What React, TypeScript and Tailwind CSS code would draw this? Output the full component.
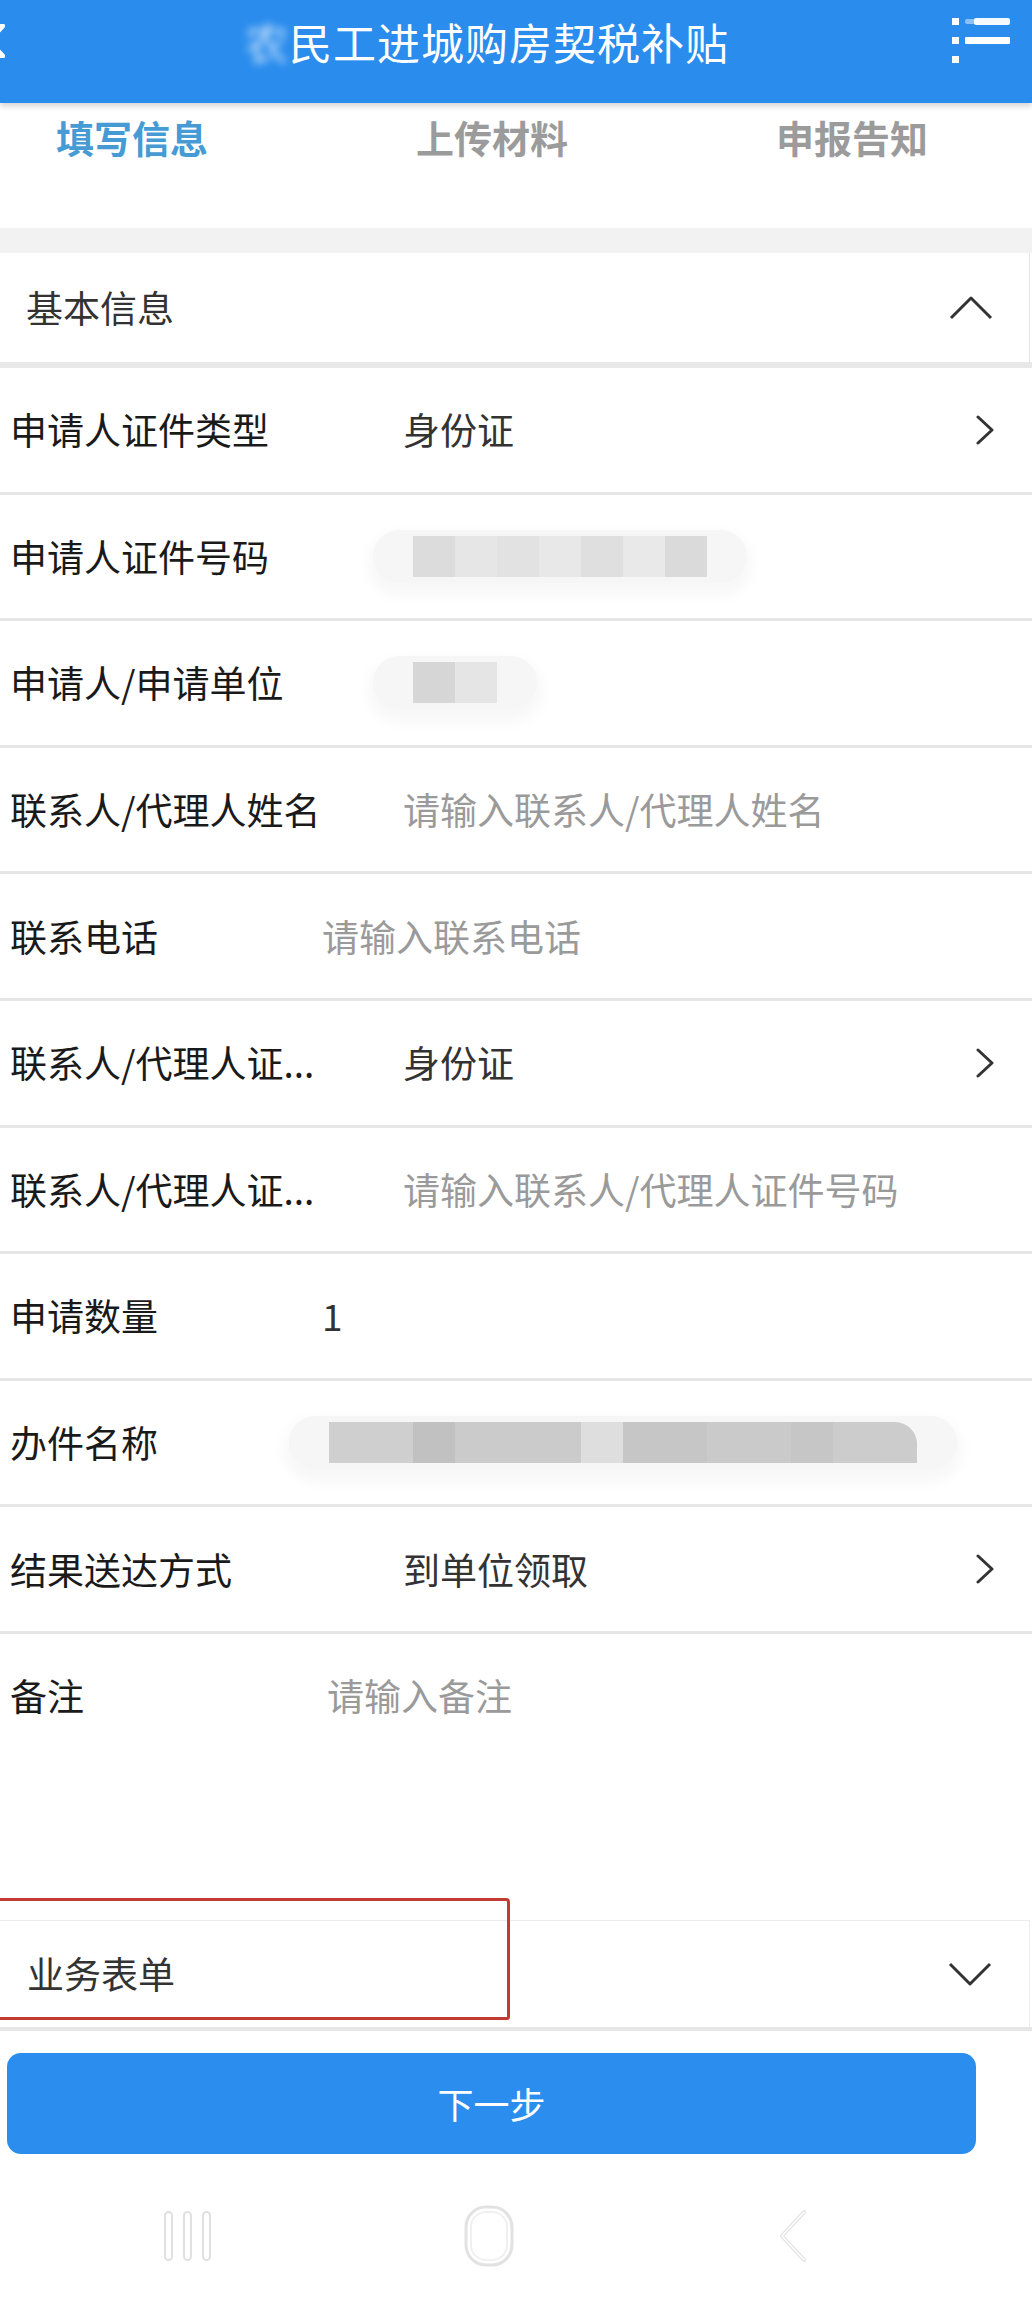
import React from "react";

function ChevronRight() {
  return (
    <svg width="18" height="30" viewBox="0 0 18 30" className="shrink-0">
      <polyline points="2,2 16,15 2,28" fill="none" stroke="#333" strokeWidth="3" strokeLinecap="round" strokeLinejoin="round" />
    </svg>
  );
}

function Row({
  label,
  wide,
  chevron,
  children,
}: {
  label: string;
  wide: boolean;
  chevron?: boolean;
  children?: React.ReactNode;
}) {
  return (
    <div className="flex h-[126.6px] items-center border-b-[3px] border-[#e6e6e6] pl-[10px] pr-[38px]">
      <div className={wide ? "w-[393px] shrink-0 text-[#1a1a1a]" : "w-[312px] shrink-0 text-[#1a1a1a]"}>{label}</div>
      <div className="flex flex-1 items-center">{children}</div>
      {chevron && <ChevronRight />}
    </div>
  );
}

function Blocks({ colors, widths, last }: { colors: string[]; widths: number[]; last?: boolean }) {
  return (
    <div className="rounded-[30px] bg-[#f6f6f6] px-[40px] py-[6px] shadow-[0_8px_14px_6px_#f8f8f8]">
      <div className="flex h-[41px]">
        {colors.map((c, i) => (
          <div
            key={i}
            className={last && i === colors.length - 1 ? "h-full rounded-tr-[22px]" : "h-full"}
            style={{ background: c, width: widths[i] }}
          />
        ))}
      </div>
    </div>
  );
}

export default function App() {
  return (
    <div className="w-[1032px] h-[2307px] overflow-hidden bg-white font-['Noto_Sans_CJK_SC','Noto_Sans',sans-serif] text-[37px] leading-none">
      {/* Header */}
      <div className="relative z-10 flex h-[103px] items-center bg-[#2a8ced] pb-[21px] shadow-[0_3px_6px_rgba(0,0,0,0.18)]">
        <svg width="30" height="34" viewBox="0 0 30 34" className="-ml-[24px] shrink-0">
          <polyline points="26,2 12,17 26,32" fill="none" stroke="#ffffff" strokeWidth="6" strokeLinecap="round" strokeLinejoin="round" />
        </svg>
        <div className="ml-[239px] whitespace-nowrap text-[43px] tracking-[1px] text-white">
          <span className="inline-block blur-[4px] opacity-80">农</span>民工进城购房契税补贴
        </div>
        <div className="flex-1" />
        <svg width="58" height="46" viewBox="0 0 58 46" className="mr-[22px] shrink-0">
          <rect x="0" y="0" width="7" height="7" fill="#fff" />
          <rect x="0" y="19" width="7" height="7" fill="#fff" />
          <rect x="0" y="38" width="7" height="7" fill="#fff" />
          <rect x="22" y="0" width="36" height="7" rx="2" fill="#fff" opacity="0.95" />
          <rect x="13" y="1" width="14" height="5" rx="2" fill="#fff" opacity="0.45" />
          <rect x="13" y="19" width="45" height="7" rx="1" fill="#fff" />
        </svg>
      </div>

      {/* Tabs */}
      <div className="flex h-[125px] items-start gap-[208px] bg-white pl-[56px] pt-[15px] text-[38px] font-bold leading-[38px]">
        <div className="text-[#469bd4]">填写信息</div>
        <div className="text-[#9b9b9b]">上传材料</div>
        <div className="text-[#9b9b9b]">申报告知</div>
      </div>

      <div className="h-[25px] bg-[#f2f2f2]" />

      {/* Section header */}
      <div className="flex h-[109px] w-[1030px] items-center border-r border-[#e5e5e5] bg-white pl-[26px] pr-[36px]">
        <div className="flex-1 text-[#333]">基本信息</div>
        <svg width="44" height="24" viewBox="0 0 44 24">
          <polyline points="2,22 22,2 42,22" fill="none" stroke="#333" strokeWidth="3" strokeLinejoin="round" />
        </svg>
      </div>
      <div className="h-[6px] bg-[#e8e8e8]" />

      {/* Rows */}
      <Row label="申请人证件类型" wide chevron>
        <span className="text-[#333]">身份证</span>
      </Row>
      <Row label="申请人证件号码" wide>
        <div className="-ml-[30px]">
          <Blocks
            colors={["#dcdcdc", "#e6e6e6", "#e2e2e2", "#e8e8e8", "#dfdfdf", "#e9e9e9", "#dadada"]}
            widths={[42, 42, 42, 42, 42, 42, 42]}
          />
        </div>
      </Row>
      <Row label="申请人/申请单位" wide>
        <div className="-ml-[30px]">
          <Blocks colors={["#d6d6d6", "#e5e5e5"]} widths={[42, 42]} />
        </div>
      </Row>
      <Row label="联系人/代理人姓名" wide>
        <span className="text-[#9a9a9a]">请输入联系人/代理人姓名</span>
      </Row>
      <Row label="联系电话" wide={false}>
        <span className="text-[#9a9a9a]">请输入联系电话</span>
      </Row>
      <Row label="联系人/代理人证..." wide chevron>
        <span className="text-[#333]">身份证</span>
      </Row>
      <Row label="联系人/代理人证..." wide>
        <span className="text-[#9a9a9a]">请输入联系人/代理人证件号码</span>
      </Row>
      <Row label="申请数量" wide={false}>
        <span className="text-[#333]">1</span>
      </Row>
      <Row label="办件名称" wide={false}>
        <div className="-ml-[33px]">
          <Blocks
            colors={["#cfcfcf", "#c1c1c1", "#cbcbcb", "#dedede", "#c6c6c6", "#cacaca", "#c6c6c6", "#cccccc"]}
            widths={[84, 42, 126, 42, 84, 84, 42, 84]}
            last
          />
        </div>
      </Row>
      <Row label="结果送达方式" wide chevron>
        <span className="text-[#333]">到单位领取</span>
      </Row>

      {/* Remark */}
      <div className="h-[286px] bg-white">
        <div className="flex h-[124px] items-center pl-[10px]">
          <div className="w-[317px] shrink-0 text-[#1a1a1a]">备注</div>
          <div className="text-[#9a9a9a]">请输入备注</div>
        </div>
      </div>

      {/* Business form section */}
      <div className="relative">
        <div className="flex h-[107px] w-[1030px] items-center border-t border-r border-[#ececec] bg-white pl-[27px] pr-[37px]">
          <div className="flex-1 text-[#333]">业务表单</div>
          <svg width="44" height="24" viewBox="0 0 44 24">
            <polyline points="2,2 22,22 42,2" fill="none" stroke="#333" strokeWidth="3" strokeLinejoin="round" />
          </svg>
        </div>
        <div className="h-[4px] bg-[#e6e6e6]" />
        <div className="pointer-events-none absolute -left-[4px] -top-[22px] h-[122px] w-[514px] rounded-tr-[4px] rounded-br-[3px] border-[3px] border-[#c23b32]" />
      </div>

      {/* Next button */}
      <div className="pl-[7px] pt-[22px]">
        <div className="flex h-[101px] w-[969px] items-center justify-center rounded-[14px] bg-[#2b8eef] text-[36px] text-white">
          下一步
        </div>
      </div>

      {/* Android nav bar */}
      <div className="flex h-[153px] items-start pl-[163px] pt-[56px]">
        <svg width="50" height="52" viewBox="0 0 50 52">
          <rect x="2" y="2" width="7" height="48" rx="3.5" fill="none" stroke="#e0e0e0" strokeWidth="2" />
          <rect x="21" y="2" width="7" height="48" rx="3.5" fill="none" stroke="#e0e0e0" strokeWidth="2" />
          <rect x="40" y="2" width="7" height="48" rx="3.5" fill="none" stroke="#e0e0e0" strokeWidth="2" />
        </svg>
        <svg width="52" height="64" viewBox="0 0 52 64" className="ml-[250px] -mt-[6px]">
          <rect x="3" y="3" width="46" height="58" rx="20" fill="none" stroke="#e2e2e2" strokeWidth="3" />
          <rect x="8" y="8" width="36" height="48" rx="15" fill="none" stroke="#f0f0f0" strokeWidth="2" />
        </svg>
        <svg width="32" height="52" viewBox="0 0 32 52" className="ml-[261px]">
          <polyline points="28,2 6,26 28,50" fill="none" stroke="#e2e2e2" strokeWidth="4" strokeLinecap="round" strokeLinejoin="round" />
          <polyline points="28,2 6,26 28,50" fill="none" stroke="#ffffff" strokeWidth="1.5" strokeLinecap="round" strokeLinejoin="round" />
        </svg>
      </div>
    </div>
  );
}
